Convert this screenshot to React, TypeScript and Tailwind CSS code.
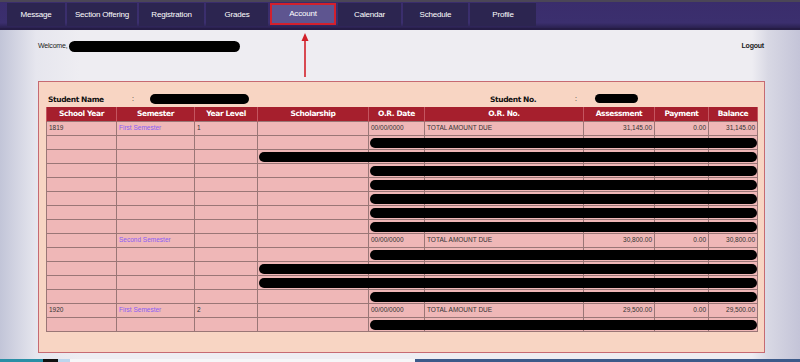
import React from "react";

const navItems = [
  { label: "Message", w: 58 },
  { label: "Section Offering", w: 70 },
  { label: "Registration", w: 65 },
  { label: "Grades", w: 62 },
  { label: "Account", w: 66, active: true },
  { label: "Calendar", w: 63 },
  { label: "Schedule", w: 65 },
  { label: "Profile", w: 66 },
];

const cols = [70, 78, 63, 111, 56, 159, 71, 54, 49];
const headers = ["School Year", "Semester", "Year Level", "Scholarship", "O.R. Date", "O.R. No.", "Assessment", "Payment", "Balance"];

type Row = {
  sy?: string;
  sem?: string;
  yl?: string;
  date?: string;
  orno?: string;
  a?: string;
  p?: string;
  b?: string;
  pill?: "date" | "schol";
};

const rows: Row[] = [
  { sy: "1819", sem: "First Semester", yl: "1", date: "00/00/0000", orno: "TOTAL AMOUNT DUE", a: "31,145.00", p: "0.00", b: "31,145.00" },
  { pill: "date" },
  { pill: "schol" },
  { pill: "date" },
  { pill: "date" },
  { pill: "date" },
  { pill: "date" },
  { pill: "date" },
  { sem: "Second Semester", date: "00/00/0000", orno: "TOTAL AMOUNT DUE", a: "30,800.00", p: "0.00", b: "30,800.00" },
  { pill: "date" },
  { pill: "schol" },
  { pill: "schol" },
  { pill: "date" },
  { sy: "1920", sem: "First Semester", yl: "2", date: "00/00/0000", orno: "TOTAL AMOUNT DUE", a: "29,500.00", p: "0.00", b: "29,500.00" },
  { pill: "date" },
];

function Pill({ width }: { width: number }) {
  return (
    <div
      className="absolute top-[2px] left-[1px] h-[10px] rounded-full bg-black z-10"
      style={{ width }}
    />
  );
}

export default function App() {
  const cell = "border border-[#9a7676] h-[14px] p-0 px-[2px] text-[6.5px] leading-none text-[#333] whitespace-nowrap overflow-visible";
  return (
    <div
      className="w-[800px] h-[362px] overflow-hidden flex flex-col relative bg-[linear-gradient(to_right,#c2c5d8_0%,#e6e6ee_4.5%,#eeedf2_10%,#eeedf2_94%,#d8d8e4_96%,#c4c4d8_100%)]"
      style={{ fontFamily: '"Liberation Sans", Arial, sans-serif' }}
    >
      {/* Nav */}
      <div className="h-[2px] bg-[#4b4657]" />
      <div className="h-[28px] bg-[linear-gradient(to_bottom,#3a2d6c,#3b2f6e_80%,#2a2150)] border-b-[2px] border-[#251c45] flex items-start pl-[7px] gap-[2px] pt-[1px]">
        {navItems.map((n) =>
          n.active ? (
            <div
              key={n.label}
              className="h-[22px] flex items-center justify-center bg-[#5e5590] border-[2px] border-[#d3202d] text-white text-[8px] tracking-[-0.2px]"
              style={{ width: n.w }}
            >
              {n.label}
            </div>
          ) : (
            <div
              key={n.label}
              className="h-[23px] flex items-center justify-center bg-[#2c2550] text-white text-[8px] tracking-[-0.2px]"
              style={{ width: n.w }}
            >
              {n.label}
            </div>
          )
        )}
      </div>

      {/* Welcome row */}
      <div className="mt-[11px] h-[11px] flex items-center pl-[38px] pr-[36px]">
        <span className="text-[7px] text-[#222] tracking-[-0.2px]">Welcome,</span>
        <div className="ml-[2px] w-[171px] h-[11px] rounded-full bg-black" />
        <span className="ml-auto text-[7px] text-[#222] font-bold tracking-[-0.2px]">Logout</span>
      </div>

      {/* Arrow overlay */}
      <svg className="absolute left-[299px] top-[32px]" width="12" height="46" viewBox="0 0 12 46">
        <line x1="6" y1="8" x2="6" y2="45" stroke="#d2202a" strokeWidth="1.6" />
        <polygon points="6,1 2.5,9 9.5,9" fill="#d2202a" />
      </svg>

      {/* Panel */}
      <div className="mt-[29px] ml-[38px] w-[727px] h-[272px] border border-[#c66a72] bg-[#f8d5c3] px-[7px] pt-[10px]">
        <div className="h-[15px] flex items-center relative">
          <span className="absolute left-[2px] text-[7.5px] font-bold text-[#111]" style={{ fontFamily: '"DejaVu Sans", sans-serif', letterSpacing: "-0.4px" }}>Student Name</span>
          <span className="absolute left-[86px] text-[7px] text-[#111]">:</span>
          <div className="absolute left-[104px] top-[2px] w-[99px] h-[10px] rounded-full bg-black" />
          <span className="absolute left-[444px] text-[7.5px] font-bold text-[#111]" style={{ fontFamily: '"DejaVu Sans", sans-serif', letterSpacing: "-0.4px" }}>Student No.</span>
          <span className="absolute left-[529px] text-[7px] text-[#111]">:</span>
          <div className="absolute left-[549px] top-[2px] w-[43px] h-[9px] rounded-full bg-black" />
        </div>
        <table className="border-collapse table-fixed w-[711px] bg-[#efb7b7]">
          <colgroup>
            {cols.map((w, i) => (
              <col key={i} style={{ width: w }} />
            ))}
          </colgroup>
          <thead>
            <tr className="bg-[#a61f2d] h-[14px]">
              {headers.map((h) => (
                <th
                  key={h}
                  className="border-x border-[#c45560] p-0 text-center text-white text-[7.5px] font-bold leading-none"
                  style={{ fontFamily: '"DejaVu Sans", sans-serif', letterSpacing: "-0.4px" }}
                >
                  {h}
                </th>
              ))}
            </tr>
          </thead>
          <tbody>
            {rows.map((r, i) => (
              <tr key={i} className="h-[14px]">
                <td className={cell}>{r.sy}</td>
                <td className={`${cell} text-[#8a5ef5]`}>
                  <span className="text-[#8a5ef5]">{r.sem}</span>
                </td>
                <td className={cell}>{r.yl}</td>
                <td className={`${cell} relative`}>{r.pill === "schol" && <Pill width={498} />}</td>
                <td className={`${cell} relative`}>
                  {r.pill === "date" && <Pill width={387} />}
                  {r.date}
                </td>
                <td className={cell}>{r.orno}</td>
                <td className={`${cell} text-right`}>{r.a}</td>
                <td className={`${cell} text-right`}>{r.p}</td>
                <td className={`${cell} text-right`}>{r.b}</td>
              </tr>
            ))}
          </tbody>
        </table>
      </div>

      {/* Bottom strip */}
      <div className="mt-auto h-[3px] flex">
        <div className="w-[43px] bg-[#2a8fa6]" />
        <div className="w-[15px] bg-[#111]" />
        <div className="w-[12px] bg-[#bcd6ee]" />
        <div className="w-[345px] bg-[#f6f6f8]" />
        <div className="flex-1 bg-[#3c5a8a]" />
      </div>
    </div>
  );
}
